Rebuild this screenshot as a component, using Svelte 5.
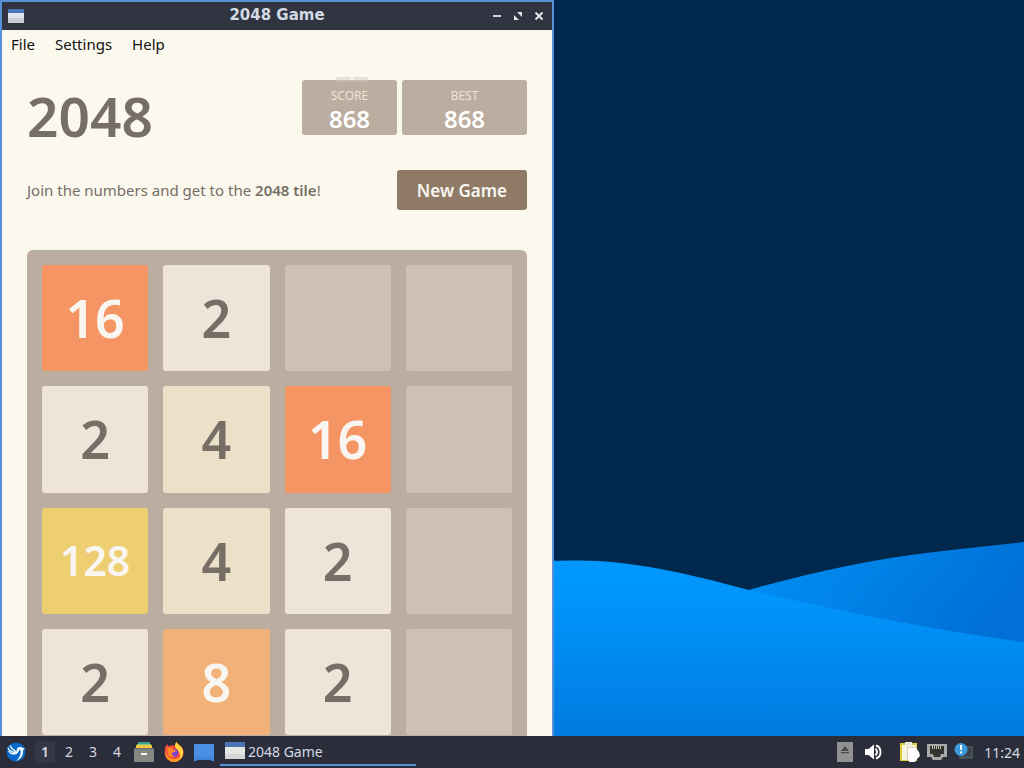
<script>
  const menus = ['File', 'Settings', 'Help'];
  const workspaces = [1, 2, 3, 4];
  let active = $state(1);
  const tiles = [16, 2, 0, 0, 2, 4, 16, 0, 128, 4, 2, 0, 2, 8, 2, 0];
</script>

<div class="screen">
  <main class="desktop">
    <svg class="wallpaper" viewBox="0 0 1024 736" preserveAspectRatio="none" aria-hidden="true">
      <defs>
        <linearGradient id="front" x1="0" y1="0" x2="0" y2="1">
          <stop offset="0" stop-color="#0098ff" />
          <stop offset=".2" stop-color="#0095fb" />
          <stop offset="1" stop-color="#007be0" />
        </linearGradient>
        <linearGradient id="back" x1="0" y1="0" x2="1" y2="0.3">
          <stop offset="0" stop-color="#0094fa" />
          <stop offset=".5" stop-color="#0084e9" />
          <stop offset="1" stop-color="#0070d6" />
        </linearGradient>
      </defs>
      <path fill="#00284d" d="M0 0h1024v736H0z" />
      <path fill="url(#back)" d="M700 604L749 590C805 574 870 559 943 551L1024 542V660L850 640z" />
      <path fill="url(#front)" d="M0 640C200 600 400 561 575 560.500C630 560 685 573 749 590C830 609 920 628 1024 642V736H0z" />
    </svg>

    <section class="window" aria-label="2048 Game">
      <header class="titlebar">
        <svg class="app-icon" viewBox="0 0 16 14" aria-hidden="true">
          <path fill="#4a73b5" d="M0 0h16v4H0z" /><path fill="#dfe5ea" d="M0 4h16v10H0z" /><path fill="#c7ced4" d="M0 9h16v5H0z" />
        </svg>
        <h2>2048 Game</h2>
        <div class="controls">
          <button aria-label="Minimize"><svg viewBox="0 0 12 12"><path d="M2 6h8" stroke="#e4e7ec" stroke-width="1.800" /></svg></button>
          <button aria-label="Maximize"><svg viewBox="0 0 12 12"><path fill="#e4e7ec" d="M5 2h5v5L8.500 5.500 6.500 3.500zM2 5l5 5H2z" /></svg></button>
          <button aria-label="Close"><svg viewBox="0 0 12 12"><path d="M2.500 2.500l7 7m0-7l-7 7" stroke="#e4e7ec" stroke-width="2" /></svg></button>
        </div>
      </header>

      <nav class="menubar">
        {#each menus as menu}<button>{menu}</button>{/each}
      </nav>

      <div class="game">
        <div class="heading">
          <h1>2048</h1>
          <div class="scores">
            <div class="score"><span>SCORE</span><strong>868</strong><i class="gain"></i></div>
            <div class="score best"><span>BEST</span><strong>868</strong></div>
          </div>
        </div>
        <div class="intro">
          <p>Join the numbers and get to the <strong>2048 tile</strong>!</p>
          <button class="new-game">New Game</button>
        </div>
        <div class="board">
          {#each tiles as value}
            <div class="tile tile-{value}">{value || ''}</div>
          {/each}
        </div>
      </div>
    </section>
  </main>

  <footer class="taskbar">
    <button class="start" aria-label="Applications">
      <svg viewBox="0 0 20 20">
        <circle cx="10" cy="10" r="9.500" fill="#0568c8" />
        <path fill="none" stroke="#f1f8ff" stroke-width="1.300" d="M2 5.500c1 4 4 4.500 7 5M4 3.500c1 3 3 4 6 6M2.500 9c2 3 5 3.500 8 2" />
        <path fill="#f1f8ff" d="M19 6.500c-3-.800-4-2-6.500-1.300-2 .600-1.500 3-2.500 4.800-2 1-4 1-6 .500 2 2 4.500 2.500 6.500 1.500 2-1 2.500-3 2.500-4.500 1.500.500 2 2 1.500 4-.500 3-2 5-4.500 7.500 4-1.500 6.500-4 7-8 .200-2-.500-3.200 2-4.500z" />
      </svg>
    </button>
    <div class="workspaces">
      {#each workspaces as n}
        <button class:active={active === n} onclick={() => (active = n)}>{n}</button>
      {/each}
    </div>
    <div class="launchers">
      <button aria-label="File Manager">
        <svg viewBox="0 0 20 20">
          <path fill="#38a48d" d="M4 0h12v3H4z" /><path fill="#7bc779" d="M3 2h14v2H3z" /><path fill="#f2c83f" d="M2 3h16v4H2z" />
          <path fill="#858783" d="M0 7h20v13H0z" /><path fill="#6f716e" d="M0 6h20v1.500H0z" /><path fill="#f5f5f5" d="M7 11h6v2H7z" />
        </svg>
      </button>
      <button aria-label="Firefox">
        <svg viewBox="0 0 20 20">
          <path fill="#ff4b38" d="M1 7c0-2 1-4 2.500-5 0 1.500.500 2 1.500 2.500 2-1.500 4-1.500 6-.500 0-2 .500-3 1.500-4 1 2 6.500 4 7 9.500.500 6-4 10.500-9.500 10.500S-.500 15.500 1 7z" />
          <path fill="#ff9a22" d="M1 9c2 6 5 8 9 8 5 0 8-3 8.500-8-.500 8-4 11-8.500 11S1 16 1 9z" />
          <path fill="#ffd83b" d="M12.500 0c1 3 6 4 6.500 9 .500 5-2 8-4 9 2-3 1-6 0-8-1-3-4-4-4-6 0-2 .500-3 1.500-4z" />
          <circle cx="10" cy="11" r="4.300" fill="#7c45cf" /><path fill="#ff8a25" d="M3 6c3-1 5 0 6.500 1.500C11 8 12 8 12 9c-1 1-3 1-4 2-1 2 1 3 3 3-2 2-6 1-7-2z" />
        </svg>
      </button>
      <button aria-label="Show Desktop">
        <svg viewBox="0 0 20 20"><path fill="#4a8fe6" d="M0 2h20v14H0z" /><path fill="#4385da" d="M0 15h20v4h-3v-1H3v1H0z" /></svg>
      </button>
    </div>
    <button class="task">
      <svg viewBox="0 0 20 18" aria-hidden="true">
        <path fill="#4a73b5" d="M0 0h20v6H0z" /><path fill="#e4e6e4" d="M0 5h20v12H0z" /><path fill="#d3d6d4" d="M0 12h20v5H0z" />
      </svg>
      2048 Game
    </button>
    <div class="tray">
      <button aria-label="Removable media">
        <svg viewBox="0 0 20 20"><path fill="#929292" d="M2 0h16v20H2z" /><path fill="#4a4a4a" d="M10 4l4 5H6zM6 10h8v1.200H6z" /></svg>
      </button>
      <button class="volume" aria-label="Volume">
        <svg viewBox="0 0 20 20"><path fill="#fff" d="M2 7h3.500L11 2.500v15L5.500 13H2z" /><path d="M12.500 6.500q3 3.500 0 7M13 3.500c6 2 6 11 0 13" fill="none" stroke="#fff" stroke-width="1.900" /></svg>
      </button>
      <button aria-label="Clipboard">
        <svg viewBox="0 0 20 20"><path fill="#d9cf3c" d="M0 1h17v18H0z" /><path fill="#f6f4df" d="M2 3h14v15H2z" /><path fill="#e9e9e2" d="M5 0h7v4H5z" /><path fill="#fff" d="M8 6h8l3 4 1 4-3 3-2 3H9z" /><path fill="none" stroke="#c8c8bd" stroke-width=".8" d="M7 5.500h9M7.500 6v12" /></svg>
      </button>
      <button aria-label="Network">
        <svg viewBox="0 0 20 20"><path fill="#a8aaa8" d="M0 2h20v13h-4l-2 3H6l-2-3H0z" /><path fill="#343431" d="M3 4h14v8h-3l-1 3H7l-1-3H3z" /><path d="M5.500 4v3m2-3v3m2-3v3m2-3v3m2-3v3" stroke="#c9c5a4" /></svg>
      </button>
      <button aria-label="Updates">
        <svg viewBox="0 0 20 20"><path fill="#48525a" d="M6 4h13v13H5z" /><path fill="#3a434c" d="M9 6h8v8H9z" /><circle cx="7" cy="7.500" r="6.500" fill="#3b9bdd" /><path d="M7 3v5m0 1.500v2" stroke="#fff" stroke-width="2" /></svg>
      </button>
    </div>
    <time>11:24</time>
  </footer>
</div>

<style>
  .screen {
    display: grid;
    grid-template-rows: minmax(0, 1fr) auto;
    height: 100vh;
    overflow: hidden;
    font-family: "Noto Sans", sans-serif;
  }
  button {
    border: 0;
    padding: 0;
    margin: 0;
    background: none;
    font: inherit;
    color: inherit;
  }
  svg { display: block; }
  h1, h2, p { margin: 0; }
  .desktop {
    position: relative;
    overflow: hidden;
    background: #00284d;
  }
  .wallpaper {
    position: absolute;
    inset: 0;
    width: 100%;
    height: 100%;
  }
  .window {
    position: absolute;
    top: 0;
    left: 0;
    box-sizing: border-box;
    width: 554px;
    max-width: 100%;
    border: 2px solid #5690da;
    background: #fbf8ee;
  }
  .titlebar {
    display: grid;
    grid-template-columns: 60px 1fr 60px;
    align-items: center;
    height: 28px;
    background: #2f3440;
    color: #d3dae3;
  }
  .app-icon { width: 16px; height: 14px; margin-left: 6px; }
  h2 {
    font: bold 15px/26px "DejaVu Sans", sans-serif;
    height: 28px;
    text-align: center;
  }
  .controls { display: flex; justify-content: flex-end; gap: 9px; padding-right: 7px; }
  .controls svg { width: 12px; height: 12px; }
  .menubar {
    display: flex;
    align-items: flex-start;
    gap: 20px;
    height: 30px;
    padding: 0 9px;
    font-size: 15px;
    line-height: 28px;
    color: #111;
  }
  .game { padding: 20px 25px; color: #776e65; }
  .heading, .intro { display: flex; justify-content: space-between; }
  .heading { height: 90px; }
  h1 { font-size: 55px; line-height: 72px; font-weight: 600; }
  .scores { display: flex; gap: 5px; }
  .score {
    position: relative;
    display: flex;
    flex-direction: column;
    align-items: center;
    box-sizing: border-box;
    width: 95px;
    height: 55px;
    padding-top: 7px;
    border-radius: 3px;
    background: #bbada0;
    color: #fff;
  }
  .best { width: 125px; }
  .score span { font-size: 12px; line-height: 18px; color: #eee4da; }
  .score strong { font-size: 24px; line-height: 28px; font-weight: 600; }
  .gain {
    position: absolute;
    top: -3px;
    left: 34px;
    width: 32px;
    height: 5px;
    background: linear-gradient(90deg, #d5ccbf 15px, transparent 15px 17px, #d5ccbf 17px);
    opacity: .5;
  }
  .intro { align-items: center; height: 40px; margin-bottom: 40px; }
  .intro p { font-size: 15px; }
  .intro strong { font-weight: 600; }
  .new-game {
    height: 40px;
    padding: 0 20px;
    border-radius: 3px;
    background: #8f7a66;
    color: #f9f6f2;
    font-size: 17px;
    font-weight: 600;
  }
  .board {
    display: grid;
    grid-template-columns: repeat(4, 1fr);
    gap: 15px;
    padding: 15px;
    border-radius: 6px;
    background: #bbada0;
  }
  .tile {
    display: flex;
    align-items: center;
    justify-content: center;
    aspect-ratio: 1;
    border-radius: 3px;
    font-size: 52px;
    line-height: 1;
    font-weight: 600;
    background: #eee4da;
  }
  .tile-0 { background: #cdc1b4; }
  .tile-4 { background: #ede0c8; }
  .tile-8, .tile-16, .tile-128 { color: #f9f6f2; }
  .tile-8 { background: #f2b179; }
  .tile-16 { background: #f59563; }
  .tile-128 { background: #edcf72; font-size: 41px; }
  .taskbar {
    display: flex;
    align-items: center;
    height: 32px;
    padding: 0 4px 0 6px;
    background: #2b2e3a;
    color: #d3dae3;
    font-size: 14px;
  }
  .taskbar svg { width: 20px; height: 20px; }
  .workspaces { display: flex; gap: 4px; margin-left: 9px; }
  .workspaces button { width: 20px; height: 22px; line-height: 22px; }
  .workspaces .active { background: #343844; font-weight: 600; }
  .launchers { display: flex; gap: 10px; margin-left: 7px; }
  .task {
    display: flex;
    align-items: center;
    gap: 3px;
    box-sizing: border-box;
    flex: 0 1 196px;
    height: 28px;
    margin: 0 auto 0 6px;
    padding-left: 5px;
    border-bottom: 2px solid #5690da;
  }
  .taskbar .task svg { height: 18px; }
  .tray { display: flex; gap: 7px; }
  .volume { margin: 0 10px 0 1px; }
  time { margin-left: 10px; }
</style>
